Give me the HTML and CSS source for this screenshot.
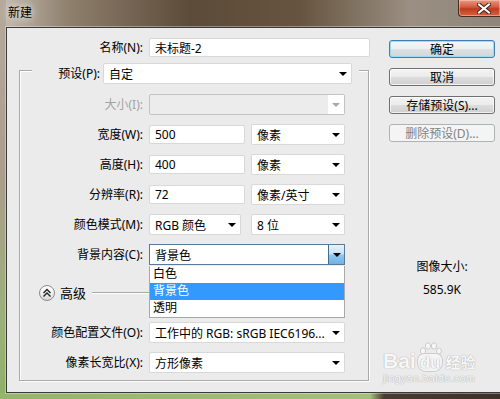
FILE: index.html
```html
<!DOCTYPE html>
<html>
<head>
  <title>新建</title>
  <link rel="stylesheet" href="styles.css">
</head>
<body>
  <div class="window">
    <div class="titlebar">
      <span class="title">新建</span>
      <div class="close-btn">
        <svg width="14" height="11" viewBox="0 0 14 11">
          <path d="M2 1.5 L12 9.5 M12 1.5 L2 9.5" stroke="#3a2620" stroke-width="4" stroke-linecap="square"/>
          <path d="M2 1.5 L12 9.5 M12 1.5 L2 9.5" stroke="#ffffff" stroke-width="2" stroke-linecap="square"/>
        </svg>
      </div>
    </div>

    <div class="client">
      <div class="left">
        <div class="name-row">
          <label class="lab name-lab" for="docname">名称(N):</label>
          <input class="inp name-inp" type="text" id="docname" value="未标题-2">
        </div>

        <div class="group">
          <div class="preset-row">
            <label class="lab preset-lab">预设(P):</label>
            <div class="sel preset-sel">自定<span class="arrow"></span></div>
          </div>

          <div class="grid">
            <label class="lab disabled">大小(I):</label>
            <div class="sel sel-disabled"><span class="blank"></span><span class="arrow"></span></div>

            <label class="lab">宽度(W):</label>
            <div class="pair">
              <input class="inp num-inp" type="text" value="500">
              <div class="sel unit-sel">像素<span class="arrow"></span></div>
            </div>

            <label class="lab">高度(H):</label>
            <div class="pair">
              <input class="inp num-inp" type="text" value="400">
              <div class="sel unit-sel">像素<span class="arrow"></span></div>
            </div>

            <label class="lab">分辨率(R):</label>
            <div class="pair">
              <input class="inp num-inp" type="text" value="72">
              <div class="sel unit-sel">像素/英寸<span class="arrow"></span></div>
            </div>

            <label class="lab">颜色模式(M):</label>
            <div class="pair mode-pair">
              <div class="sel mode-sel">RGB 颜色<span class="arrow"></span></div>
              <div class="sel unit-sel">8 位<span class="arrow"></span></div>
            </div>

            <label class="lab">背景内容(C):</label>
            <div class="bg-cell">
              <div class="sel sel-focus">背景色<span class="drop-btn"><span class="arrow"></span></span></div>
              <ul class="drop-list">
                <li>白色</li>
                <li class="picked">背景色</li>
                <li>透明</li>
              </ul>
            </div>

            <div class="adv">
              <span class="adv-btn">
                <svg width="16" height="16" viewBox="0 0 16 16">
                  <polyline points="4.5,8 8,4.5 11.5,8" fill="none" stroke="#222" stroke-width="1.4"/>
                  <polyline points="4.5,11.5 8,8 11.5,11.5" fill="none" stroke="#222" stroke-width="1.4"/>
                </svg>
              </span>
              <span class="adv-text">高级</span>
              <span class="adv-line"></span>
            </div>

            <label class="lab">颜色配置文件(O):</label>
            <div class="sel">工作中的 RGB: sRGB IEC6196...<span class="arrow"></span></div>

            <label class="lab">像素长宽比(X):</label>
            <div class="sel">方形像素<span class="arrow"></span></div>
          </div>
        </div>
      </div>

      <div class="right">
        <button class="btn btn-default">确定</button>
        <button class="btn">取消</button>
        <button class="btn">存储预设(S)...</button>
        <button class="btn" disabled>删除预设(D)...</button>
        <div class="info">
          <div>图像大小:</div>
          <div class="info-size">585.9K</div>
        </div>
      </div>

      <div class="watermark">
        <div class="wm-logo">
          <span class="wm-bai">Bai</span>
          <span class="wm-paw">
            <svg width="24" height="14" viewBox="0 0 24 14">
              <ellipse cx="5" cy="9" rx="2.6" ry="3.2" fill="#f6f6f6" stroke="#cdcdcd"/>
              <ellipse cx="10" cy="4" rx="2.6" ry="3.2" fill="#f6f6f6" stroke="#cdcdcd"/>
              <ellipse cx="16" cy="4" rx="2.6" ry="3.2" fill="#f6f6f6" stroke="#cdcdcd"/>
              <ellipse cx="21" cy="9" rx="2.4" ry="3" fill="#f6f6f6" stroke="#cdcdcd"/>
            </svg>
            <span class="wm-du">du</span>
          </span>
          <span class="wm-jy">经验</span>
        </div>
        <div class="wm-url">jingyan.baidu.com</div>
      </div>
    </div>
  </div>
</body>
</html>
```

FILE: styles.css
```css
* {
  box-sizing: border-box;
}
body {
  margin: 0;
  font-family: "Noto Sans", "Noto Sans CJK SC", sans-serif;
  font-size: 12px;
  color: #000;
}

.window {
  width: 500px;
  height: 399px;
  overflow: hidden;
  display: flex;
  flex-direction: column;
  background:
    linear-gradient(90deg, #94b56b 0, #a3bf7c 370px, #4a3c30 384px, #3c3028 500px) left bottom / 500px 6px no-repeat,
    linear-gradient(180deg, #b4aa9c 0, #a99d8c 45%, #9cb07a 80%, #8fb066 100%) left top / 6px 399px no-repeat,
    linear-gradient(90deg, #c4bdb2 0, #8e7e6c 70px, #5d4b3a 190px, #66543f 300px, #9a8f82 410px, #8f8579 500px);
}

.titlebar {
  height: 27px;
  display: flex;
  align-items: flex-start;
}
.title {
  margin: 5px 0 0 8px;
  line-height: 16px;
  text-shadow: 0 0 6px #e8e4de, 0 0 10px #e8e4de;
}
.close-btn {
  margin-left: auto;
  width: 42px;
  height: 17px;
  display: flex;
  align-items: center;
  justify-content: center;
  padding-left: 9px;
  border: 1px solid #4e2a1e;
  border-top: none;
  border-right: none;
  border-radius: 0 0 0 4px;
  background: linear-gradient(180deg, #e79a86 0, #d4583c 45%, #c03a1d 55%, #d8643f 100%);
  box-shadow: inset 0 0 0 1px rgba(255, 220, 200, 0.45);
}

.client {
  margin-left: 6px;
  height: 366px;
  display: flex;
  position: relative;
  background: #ebebeb;
  border: 1px solid #3a3a3a;
  border-right: none;
  box-shadow: 0 0 0 1px rgba(255, 255, 255, 0.35);
}

.left {
  width: 363px;
}

.lab {
  text-align: right;
  line-height: 21px;
  white-space: nowrap;
}
.disabled {
  color: #a3a3a3;
}

.inp {
  height: 19px;
  padding: 0 0 0 5px;
  font: inherit;
  color: #000;
  background: #fff;
  border: 1px solid #d8d8d8;
  border-radius: 2px;
  outline: none;
}

.name-row {
  display: flex;
  align-items: center;
  margin-top: 10px;
  height: 19px;
}
.name-lab {
  width: 136px;
  margin-right: 6px;
}
.name-inp {
  width: 221px;
}

.group {
  margin: 13px 0 0 12px;
  width: 350px;
  padding-bottom: 7px;
  border: 1px solid #a9a9a9;
  box-shadow: inset 1px 1px #fff, 1px 1px #fff;
}
.preset-row {
  display: flex;
  align-items: center;
  width: 327px;
  height: 21px;
  margin: -8px 0 0 12px;
  padding-right: 7px;
  background: #ebebeb;
}
.preset-lab {
  width: 68px;
  margin-right: 3px;
}
.preset-sel {
  width: 249px;
}

.sel {
  height: 21px;
  display: flex;
  align-items: center;
  padding-left: 5px;
  white-space: nowrap;
  background: #fff;
  border: 1px solid #d8d8d8;
  border-radius: 2px;
}
.arrow {
  margin-left: auto;
  margin-right: 4px;
  border-left: 4px solid transparent;
  border-right: 4px solid transparent;
  border-top: 4px solid #000;
}
.sel-disabled {
  padding-left: 0;
  background: #ececec;
  border-color: #c3c3c3;
}
.sel-disabled .blank {
  flex: 1;
  height: 100%;
}
.sel-disabled .arrow {
  margin-left: 0;
  margin-right: 0;
  width: 16px;
  height: 19px;
  border: none;
  background: #fff;
  position: relative;
}
.sel-disabled .arrow::after {
  content: "";
  position: absolute;
  left: 4px;
  top: 8px;
  border-left: 4px solid transparent;
  border-right: 4px solid transparent;
  border-top: 4px solid #a8a8a8;
}

.grid {
  display: grid;
  grid-template-columns: 123px 196px;
  grid-template-rows: repeat(6, 21px) 39px 21px 21px;
  column-gap: 6px;
  row-gap: 9px;
  margin-top: 10px;
}

.pair {
  display: flex;
  align-items: center;
  gap: 6px;
}
.num-inp {
  width: 96px;
}
.unit-sel {
  width: 94px;
}
.mode-pair {
  gap: 10px;
}
.mode-sel {
  width: 92px;
}

.bg-cell {
  position: relative;
}
.sel-focus {
  padding-right: 0;
  border-color: #587b9c;
  border-radius: 0;
}
.drop-btn {
  margin-left: auto;
  width: 16px;
  height: 100%;
  display: flex;
  align-items: center;
  justify-content: center;
  border-left: 1px solid #3c6e96;
  background: linear-gradient(180deg, #e9f3fb 0, #c9e2f5 45%, #8fc6ee 55%, #6db2e6 100%);
}
.drop-btn .arrow {
  margin: 0;
}
.drop-list {
  position: absolute;
  top: 22px;
  left: 0;
  width: 196px;
  margin: 0;
  padding: 0;
  list-style: none;
  background: #fff;
  border: 1px solid #a8a8a8;
  border-top: none;
  z-index: 2;
}
.drop-list li {
  height: 17px;
  line-height: 16px;
  padding-left: 3px;
}
.drop-list .picked {
  color: #fff;
  background: #3399ff;
  outline: 1px dotted #c8742e;
  outline-offset: -1px;
}

.adv {
  grid-column: 1 / 3;
  display: flex;
  align-items: center;
  height: 16px;
  margin-top: 11px;
  padding-left: 19px;
}
.adv-btn {
  width: 16px;
  height: 16px;
  display: flex;
  border: 1px solid #8c8c8c;
  border-radius: 50%;
  background: linear-gradient(180deg, #ffffff 0, #f0f0f0 50%, #d6d6d6 100%);
}
.adv-btn svg {
  margin: -1px;
}
.adv-text {
  margin-left: 5px;
  font-size: 13px;
  line-height: 16px;
}
.adv-line {
  flex: 1;
  height: 2px;
  margin-left: 6px;
  border-top: 1px solid #a8a8a8;
  border-bottom: 1px solid #fff;
}

.right {
  margin-left: 19px;
  width: 106px;
  padding-top: 12px;
  display: flex;
  flex-direction: column;
  gap: 10px;
}
.btn {
  height: 18px;
  padding: 0;
  font: inherit;
  line-height: 15px;
  color: #000;
  border: 1px solid #707070;
  border-radius: 3px;
  background: linear-gradient(180deg, #f3f3f3 0, #ebebeb 50%, #dddddd 50%, #cfcfcf 100%);
  box-shadow: inset 0 0 0 1px rgba(255, 255, 255, 0.7);
}
.btn-default {
  border-color: #3c7fb1;
  box-shadow: inset 0 0 0 1px #9cdcf7;
  background: linear-gradient(180deg, #f4f6f7 0, #eceeef 50%, #dde1e3 50%, #d1d6d9 100%);
}
.btn:disabled {
  color: #838383;
  border-color: #adb2b5;
  background: #f4f4f4;
  box-shadow: none;
}

.info {
  margin-top: 107px;
  text-align: center;
  line-height: 16px;
}
.info-size {
  margin-top: 7px;
}

.watermark {
  position: absolute;
  left: 376px;
  top: 314px;
  color: #f7f7f7;
  text-shadow: 0 0 1px #b0b0b0, 0 0 1px #b0b0b0;
}
.wm-logo {
  display: flex;
  align-items: flex-end;
}
.wm-bai {
  font-family: "Liberation Sans", sans-serif;
  font-size: 21px;
  font-weight: bold;
  line-height: 20px;
}
.wm-paw {
  display: flex;
  flex-direction: column;
  align-items: center;
  margin-left: 2px;
}
.wm-du {
  margin-top: -2px;
  padding: 0 2px;
  font-family: "Liberation Sans", sans-serif;
  font-size: 17px;
  font-weight: bold;
  line-height: 17px;
  border-radius: 6px 6px 8px 8px;
  background: #f4f4f4;
  box-shadow: 0 0 0 1px #cdcdcd;
}
.wm-jy {
  margin-left: 3px;
  font-size: 15px;
  font-weight: bold;
  line-height: 18px;
}
.wm-url {
  margin-top: 1px;
  font-family: "Liberation Sans", sans-serif;
  font-size: 11px;
  line-height: 13px;
  letter-spacing: 0.2px;
}
```
